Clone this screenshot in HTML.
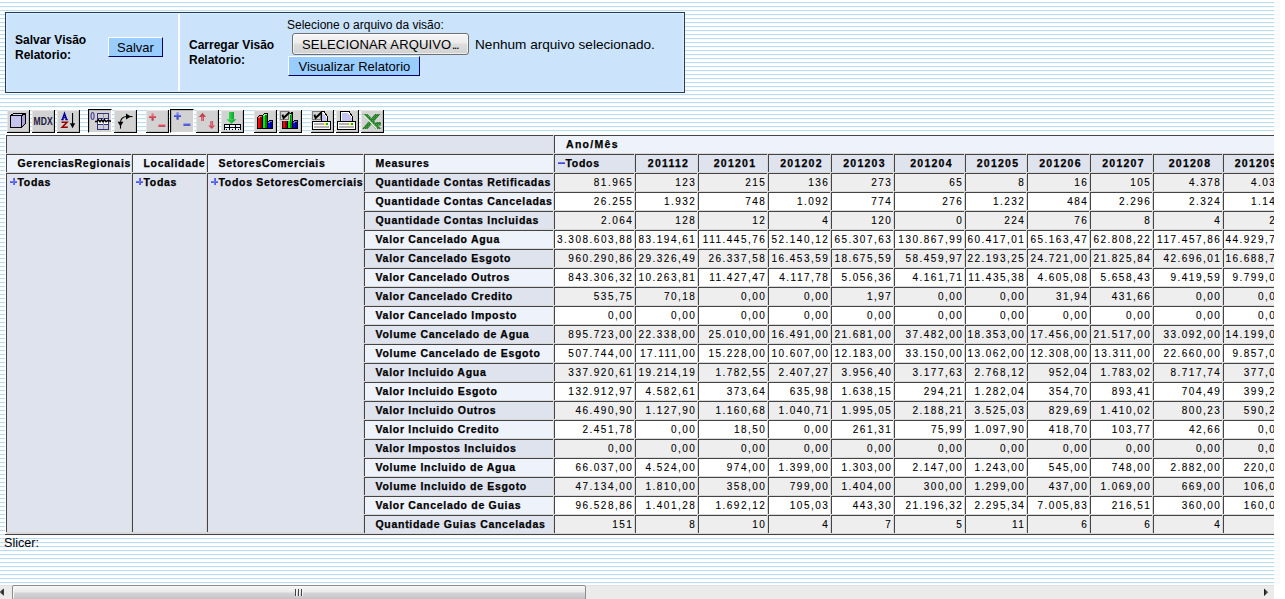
<!DOCTYPE html>
<html><head><meta charset="utf-8">
<style>
html,body{margin:0;padding:0;}
body{width:1285px;height:599px;overflow:hidden;position:relative;background:#fff;font-family:"Liberation Sans",sans-serif;}
#bg{position:absolute;left:0;top:0;width:1274px;height:599px;
 background:repeating-linear-gradient(to bottom,#fff 0px,#fff 2px,#bcdcf0 2px,#bcdcf0 3px,#f6fafd 3px,#f6fafd 4px);}
.abs{position:absolute;}
#panel{position:absolute;left:5px;top:12px;width:680px;height:81px;box-sizing:border-box;border:1px solid #213c58;background:#cbe4fc;}
#panel .inner{position:absolute;left:0;top:0;right:0;bottom:0;border:1px solid #dcefff;}
#divider{position:absolute;left:172px;top:1px;width:2px;height:77px;background:#fff;}
.lbl{position:absolute;font-weight:bold;font-size:12px;line-height:15px;color:#000;white-space:nowrap;}
.txt{position:absolute;font-size:12px;color:#000;white-space:nowrap;}
.bbtn{position:absolute;box-sizing:border-box;background:#99ccff;border-style:solid;border-width:1px;border-color:#fff #000066 #000066 #fff;font-size:13px;color:#000;white-space:nowrap;}
.fbtn{position:absolute;box-sizing:border-box;border:1px solid #707070;border-radius:3px;background:linear-gradient(to bottom,#f6f6f6 0%,#ececec 45%,#dddddd 50%,#d2d2d2 100%);box-shadow:inset 0 0 0 1px rgba(255,255,255,0.6);font-size:13px;white-space:nowrap;}
.tb{position:absolute;top:110px;width:23px;height:23px;box-sizing:border-box;background:#d2d2d2;border-right:1px solid #000;border-bottom:1px solid #000;box-shadow:inset 1px 1px 0 #e4e4e4,inset -1px -1px 0 #bcbcbc;}
.tb.pr{top:109px;width:24px;height:24px;border:none;border-top:1px solid #000;border-left:1px solid #000;border-right:1px solid #fff;border-bottom:1px solid #fff;box-shadow:inset 1px 1px 0 #b4b4b4;}
.tb svg{position:absolute;left:0;top:0;overflow:visible;}
.tb.pr svg{left:-1px;top:-1px;}
#tbl{position:absolute;left:5px;top:134px;width:1269px;height:401px;background:#fff;border-bottom:1px solid #444;box-sizing:border-box;overflow:hidden;}
.c{position:absolute;box-sizing:border-box;border-top:1px solid #444;border-left:1px solid #444;overflow:hidden;}
.hh{background:#dfe3ee;}
.hl{background:#eef2fb;}
.ce{background:#eeeeee;}
.co{background:#ffffff;}
.t{position:absolute;top:1px;font-size:10.5px;line-height:14px;white-space:nowrap;color:#000;}
.b{font-weight:bold;letter-spacing:0.7px;-webkit-text-stroke:0.25px #000;}
.r{right:0.6px;letter-spacing:1.5px;font-size:10px;top:1.5px;-webkit-text-stroke:0.1px #000;}
.ctr{left:0;right:0;text-align:center;}
.ic{position:absolute;display:block;line-height:0;}
.ic svg{display:block;}
#scroll{position:absolute;left:0;top:585px;width:1274px;height:14px;background:#ebebeb;}
#thumb{position:absolute;left:12px;top:0px;width:574px;height:15px;box-sizing:border-box;border:1px solid #8c8c8c;border-radius:2px;background:linear-gradient(to bottom,#f6f6f6 0px,#ebebeb 6px,#d4d4d6 7px,#c8c8ca 12px,#c0c0c4 13px);box-shadow:inset 1px 1px 0 #fafafa;}
</style></head><body>
<div id="bg"></div>

<div id="panel"><div class="inner"></div><div id="divider"></div></div>
<div class="lbl" style="left:15px;top:33px;">Salvar Visão<br>Relatorio:</div>
<div class="bbtn" style="left:108px;top:37px;width:55px;height:20px;"><span style="position:absolute;left:8px;top:1.5px;">Salvar</span></div>
<div class="lbl" style="left:189px;top:38px;">Carregar Visão<br>Relatorio:</div>
<div class="txt" style="left:287px;top:18px;">Selecione o arquivo da visão:</div>
<div class="fbtn" style="left:292px;top:33px;width:177px;height:22px;"><span style="position:absolute;left:9px;top:3px;letter-spacing:0.15px;">SELECIONAR ARQUIVO<span style="letter-spacing:-1.6px;margin-left:0.5px">...</span></span></div>
<div class="txt" style="left:475px;top:37px;font-size:13.6px;">Nenhum arquivo selecionado.</div>
<div class="bbtn" style="left:288px;top:56px;width:132px;height:20px;"><span style="position:absolute;left:9.5px;top:1.5px;">Visualizar Relatorio</span></div>

<div id="toolbar">
<div class="tb" style="left:7px"><svg width="23" height="23" viewBox="0 0 23 23" shape-rendering="crispEdges"><polygon points="3.5,5.5 6.5,3.5 18.5,3.5 14.5,5.5" fill="#d4d4f4" stroke="#000"/>
<polygon points="14.5,5.5 18.5,3.5 18.5,13.5 14.5,17.5" fill="#a4a4d6" stroke="#000"/>
<rect x="3.5" y="5.5" width="11" height="12" fill="#c4c4ec" stroke="#000"/></svg></div>
<div class="tb" style="left:32px"><svg width="23" height="23" viewBox="0 0 23 23" shape-rendering="crispEdges"><text x="1.6" y="14.6" font-family="Liberation Sans" font-weight="bold" font-size="10.5" fill="#20183c" textLength="19" lengthAdjust="spacingAndGlyphs" shape-rendering="auto">MDX</text></svg></div>
<div class="tb" style="left:57px"><svg width="23" height="23" viewBox="0 0 23 23" shape-rendering="crispEdges"><g shape-rendering="auto">
<path d="M5.4,9.4 L7.5,3.6 L9.6,9.4" fill="none" stroke="#0000a0" stroke-width="1.6"/>
<path d="M4.2,9.7 H6.6 M8.4,9.7 H10.8 M6.2,7.6 H8.8" fill="none" stroke="#0000a0" stroke-width="1.2"/>
<path d="M5,12.3 H10 L5.2,17.3 H10.2" fill="none" stroke="#980000" stroke-width="1.6"/>
<path d="M5,11.6 V13 M10.2,16.4 V18" fill="none" stroke="#980000" stroke-width="1"/>
<rect x="15" y="3" width="1.1" height="11" fill="#000"/>
<polygon points="12.9,13.2 18.2,13.2 15.55,18.2" fill="#000"/></g></svg></div>
<div class="tb pr" style="left:88px"><svg width="23" height="23" viewBox="0 0 23 23" shape-rendering="crispEdges"><g shape-rendering="auto"><ellipse cx="4.6" cy="7" rx="1.5" ry="3.5" fill="none" stroke="#4a4a96" stroke-width="1.2"/></g>
<rect x="9.5" y="4.5" width="11" height="16" fill="#d0d0d0" stroke="#33337a"/>
<rect x="10" y="9" width="10" height="6" fill="#ffffff"/>
<line x1="9.5" y1="9.5" x2="20.5" y2="9.5" stroke="#33337a"/>
<line x1="9.5" y1="15.5" x2="20.5" y2="15.5" stroke="#33337a"/>
<line x1="15.5" y1="5" x2="15.5" y2="20" stroke="#9090d8"/>
<g shape-rendering="auto"><path d="M7,12.4 L9,12.4 L10.5,10.8 L12,12.8 L13.5,10.8 L15,12.8 L16.5,10.8 L18,12.8 L19.5,11.6 L23,12.2" fill="none" stroke="#000" stroke-width="1.5"/></g></svg></div>
<div class="tb" style="left:114px"><svg width="23" height="23" viewBox="0 0 23 23" shape-rendering="crispEdges"><g shape-rendering="auto"><path d="M6.5,13 Q6.5,7 12.5,6.5" fill="none" stroke="#000" stroke-width="1.1"/>
<polygon points="12,3.4 16.8,6.5 12,9.6" fill="#000"/><rect x="15" y="6" width="3.5" height="1.1" fill="#000"/>
<polygon points="3.6,11.8 9.4,11.8 6.5,16.4" fill="#000"/><rect x="5.95" y="15" width="1.1" height="3.6" fill="#000"/></g></svg></div>
<div class="tb" style="left:146px"><svg width="23" height="23" viewBox="0 0 23 23" shape-rendering="crispEdges"><defs><linearGradient id="gr1" x1="0" y1="0" x2="0" y2="1"><stop offset="0" stop-color="#f590a0"/><stop offset="0.5" stop-color="#e05060"/><stop offset="1" stop-color="#a83040"/></linearGradient></defs>
<g transform="translate(0,0)" shape-rendering="auto"><rect x="3" y="5.8" width="7" height="2.2" fill="url(#gr1)"/><rect x="5.5" y="3" width="2.2" height="7.6" fill="url(#gr1)"/>
<rect x="12.4" y="14.2" width="7" height="2.6" fill="url(#gr1)"/></g></svg></div>
<div class="tb pr" style="left:170px"><svg width="23" height="23" viewBox="0 0 23 23" shape-rendering="crispEdges"><defs><linearGradient id="gb1" x1="0" y1="0" x2="0" y2="1"><stop offset="0" stop-color="#90a0ff"/><stop offset="0.5" stop-color="#5060e8"/><stop offset="1" stop-color="#3038a8"/></linearGradient></defs>
<g transform="translate(1,0)" shape-rendering="auto"><rect x="3" y="5.8" width="7" height="2.2" fill="url(#gb1)"/><rect x="5.5" y="3" width="2.2" height="7.6" fill="url(#gb1)"/>
<rect x="12.4" y="14.2" width="7" height="2.6" fill="url(#gb1)"/></g></svg></div>
<div class="tb" style="left:196px"><svg width="23" height="23" viewBox="0 0 23 23" shape-rendering="crispEdges"><defs><linearGradient id="ga" x1="0" y1="0" x2="1" y2="0"><stop offset="0" stop-color="#b03040"/><stop offset="0.5" stop-color="#f08090"/><stop offset="1" stop-color="#c03848"/></linearGradient></defs>
<g shape-rendering="auto"><polygon points="2.8,7 6.6,2.8 10,7" fill="#c04050"/><rect x="5.3" y="6.5" width="2.7" height="4.5" fill="url(#ga)"/>
<rect x="14.4" y="11" width="2.7" height="4.6" fill="url(#ga)"/><polygon points="12.2,15.4 19.2,15.4 15.7,19" fill="#d04858"/></g></svg></div>
<div class="tb" style="left:221px"><svg width="23" height="23" viewBox="0 0 23 23" shape-rendering="crispEdges"><defs><linearGradient id="gg" x1="0" y1="0" x2="1" y2="0"><stop offset="0" stop-color="#30e050"/><stop offset="1" stop-color="#10a030"/></linearGradient></defs>
<rect x="7.7" y="2" width="5.4" height="7.4" fill="url(#gg)"/>
<g shape-rendering="auto"><polygon points="5.4,9.3 15.4,9.3 10.4,14" fill="url(#gg)"/></g>
<rect x="3.5" y="14.5" width="16" height="6" fill="#e4f2ff" stroke="#000"/>
<line x1="3" y1="17.5" x2="20" y2="17.5" stroke="#000"/>
<line x1="8.5" y1="14" x2="8.5" y2="21" stroke="#000"/>
<line x1="14" y1="14" x2="14" y2="21" stroke="#000"/>
<rect x="3" y="20" width="17" height="1" fill="#d4d4d4"/>
<rect x="5" y="19" width="1" height="1" fill="#000"/><rect x="11" y="19" width="1" height="1" fill="#000"/><rect x="17" y="19" width="1" height="1" fill="#000"/></svg></div>
<div class="tb" style="left:254px"><svg width="23" height="23" viewBox="0 0 23 23" shape-rendering="crispEdges"><polygon points="3,8 4,6 5,5 9,5 9,19 3,19" fill="#000"/><rect x="4" y="8" width="2" height="10" fill="#ff0000"/><rect x="6" y="7" width="2" height="11" fill="#8c0000"/><rect x="5" y="6" width="3" height="1" fill="#ff7070"/><rect x="4" y="7" width="2" height="1" fill="#ff7070"/><polygon points="8,6 9,4 10,3 14,3 14,19 8,19" fill="#000"/><rect x="9" y="6" width="2" height="12" fill="#00f000"/><rect x="11" y="5" width="2" height="13" fill="#008000"/><rect x="10" y="4" width="3" height="1" fill="#80ff80"/><rect x="9" y="5" width="2" height="1" fill="#80ff80"/><polygon points="13,13 14,11 15,10 19,10 19,19 13,19" fill="#000"/><rect x="14" y="13" width="2" height="5" fill="#0000ff"/><rect x="16" y="12" width="2" height="6" fill="#00008c"/><rect x="15" y="11" width="3" height="1" fill="#7070ff"/><rect x="14" y="12" width="2" height="1" fill="#7070ff"/></svg></div>
<div class="tb" style="left:279px"><svg width="23" height="23" viewBox="0 0 23 23" shape-rendering="crispEdges"><polygon points="3,8 4,6 5,5 9,5 9,19 3,19" fill="#000"/><rect x="4" y="8" width="2" height="10" fill="#ff0000"/><rect x="6" y="7" width="2" height="11" fill="#8c0000"/><rect x="5" y="6" width="3" height="1" fill="#ff7070"/><rect x="4" y="7" width="2" height="1" fill="#ff7070"/><polygon points="8,6 9,4 10,3 14,3 14,19 8,19" fill="#000"/><rect x="9" y="6" width="2" height="12" fill="#00f000"/><rect x="11" y="5" width="2" height="13" fill="#008000"/><rect x="10" y="4" width="3" height="1" fill="#80ff80"/><rect x="9" y="5" width="2" height="1" fill="#80ff80"/><polygon points="13,13 14,11 15,10 19,10 19,19 13,19" fill="#000"/><rect x="14" y="13" width="2" height="5" fill="#0000ff"/><rect x="16" y="12" width="2" height="6" fill="#00008c"/><rect x="15" y="11" width="3" height="1" fill="#7070ff"/><rect x="14" y="12" width="2" height="1" fill="#7070ff"/><rect x="0" y="0" width="11" height="11" fill="#d2d2d2"/><rect x="1.5" y="1.5" width="8" height="8" fill="#d0d0d0" stroke="#7a7a7a"/>
<g shape-rendering="auto"><path d="M3.4,4.6 L4.6,8 L10.6,2.2" fill="none" stroke="#000" stroke-width="1.9"/></g><rect x="12" y="2" width="2" height="10" fill="#000"/><rect x="12.3" y="4" width="1" height="8" fill="#00c000"/></svg></div>
<div class="tb" style="left:311px"><svg width="23" height="23" viewBox="0 0 23 23" shape-rendering="crispEdges"><polygon points="10.5,1.5 13,1.5 16.5,6.5 16.5,11.5 10.5,11.5" fill="#fff" stroke="#000"/><polygon points="11,3 12,3 15.5,7.5 15.5,11 11,11" fill="#c4c4ee"/><rect x="1.5" y="1.5" width="8" height="8" fill="#d0d0d0" stroke="#7a7a7a"/>
<g shape-rendering="auto"><path d="M3.4,4.6 L4.6,8 L10.6,2.2" fill="none" stroke="#000" stroke-width="1.9"/></g><rect x="1.6" y="11.6" width="17.8" height="7.8" rx="1.2" fill="#fff" stroke="#000" stroke-width="1.3"/>
<g fill="#b4b4b4"><rect x="3" y="13.2" width="10" height="1.6"/><rect x="3" y="16.4" width="15" height="1.6"/></g>
<rect x="13" y="13" width="2" height="2" fill="#ffff00"/><rect x="15" y="13" width="2" height="2" fill="#00c000"/></svg></div>
<div class="tb" style="left:336px"><svg width="23" height="23" viewBox="0 0 23 23" shape-rendering="crispEdges"><polygon points="4.5,1.5 13,1.5 16.5,6.5 16.5,11.5 4.5,11.5" fill="#fff" stroke="#000"/>
<polygon points="6,3 12,3 15.5,7.5 15.5,11 6,11" fill="#c4c4ee"/><rect x="1.6" y="11.6" width="17.8" height="7.8" rx="1.2" fill="#fff" stroke="#000" stroke-width="1.3"/>
<g fill="#b4b4b4"><rect x="3" y="13.2" width="10" height="1.6"/><rect x="3" y="16.4" width="15" height="1.6"/></g>
<rect x="13" y="13" width="2" height="2" fill="#ffff00"/><rect x="15" y="13" width="2" height="2" fill="#00c000"/></svg></div>
<div class="tb" style="left:361px"><svg width="23" height="23" viewBox="0 0 23 23" shape-rendering="crispEdges"><defs><pattern id="dith" width="2" height="2" patternUnits="userSpaceOnUse"><rect width="2" height="2" fill="#188018"/><rect x="1" y="0" width="1" height="1" fill="#6a9a6a"/><rect x="0" y="1" width="1" height="1" fill="#3a8a3a"/></pattern></defs><g shape-rendering="auto"><polygon points="1,4 6.5,4 20.5,19 15,19" fill="url(#dith)"/>
<polygon points="14,4 19.5,4 6.5,19 1,19" fill="url(#dith)"/>
<rect x="15" y="12" width="5" height="3.5" fill="url(#dith)"/>
<line x1="2.2" y1="4.6" x2="15.8" y2="18.6" stroke="#ffffff" stroke-width="1.1"/></g></svg></div>
</div>

<div id="tblwrap" style="position:absolute;left:0;top:0;width:1274px;height:599px;overflow:hidden;">
<div style="position:absolute;left:5px;top:534px;width:1269px;height:1px;background:#444;"></div>
<div style="position:absolute;left:5px;top:134px;width:1269px;height:400px;background:#fff;"></div><div style="position:absolute;left:6px;top:135px;width:1268px;height:399px;background:#d8d8d8;"></div>
<div class="c hh" style="left:6px;top:135px;width:547px;height:18px;"></div>
<div class="c hl" style="left:554px;top:135px;width:746px;height:18px;"><span class="t b" style="left:11px;letter-spacing:1.3px">Ano/Mês</span></div>
<div class="c hl" style="left:6px;top:154px;width:125px;height:18px;"><span class="t b" style="left:10.5px">GerenciasRegionais</span></div>
<div class="c hl" style="left:132px;top:154px;width:74px;height:18px;"><span class="t b" style="left:10.5px">Localidade</span></div>
<div class="c hl" style="left:207px;top:154px;width:156px;height:18px;"><span class="t b" style="left:10.5px">SetoresComerciais</span></div>
<div class="c hl" style="left:364px;top:154px;width:189px;height:18px;"><span class="t b" style="left:10.5px">Measures</span></div>
<div class="c hh" style="left:554px;top:154px;width:80px;height:18px;"><span class="ic" style="left:3px;top:7px"><svg width="7" height="2" viewBox="0 0 7 2" shape-rendering="crispEdges"><rect x="0" y="0" width="7" height="1" fill="#6a78f4"/><rect x="0" y="1" width="7" height="1" fill="#3c48c4"/></svg></span><span class="t b" style="left:10.5px">Todos</span></div>
<div class="c hh" style="left:635px;top:154px;width:62px;height:18px;"><span class="t b ctr" style="letter-spacing:1.25px;text-indent:4px">201112</span></div>
<div class="c hh" style="left:698px;top:154px;width:69px;height:18px;"><span class="t b ctr" style="letter-spacing:1.25px;text-indent:4px">201201</span></div>
<div class="c hh" style="left:768px;top:154px;width:62px;height:18px;"><span class="t b ctr" style="letter-spacing:1.25px;text-indent:4px">201202</span></div>
<div class="c hh" style="left:831px;top:154px;width:62px;height:18px;"><span class="t b ctr" style="letter-spacing:1.25px;text-indent:4px">201203</span></div>
<div class="c hh" style="left:894px;top:154px;width:70px;height:18px;"><span class="t b ctr" style="letter-spacing:1.25px;text-indent:4px">201204</span></div>
<div class="c hh" style="left:965px;top:154px;width:61px;height:18px;"><span class="t b ctr" style="letter-spacing:1.25px;text-indent:4px">201205</span></div>
<div class="c hh" style="left:1027px;top:154px;width:62px;height:18px;"><span class="t b ctr" style="letter-spacing:1.25px;text-indent:4px">201206</span></div>
<div class="c hh" style="left:1090px;top:154px;width:62px;height:18px;"><span class="t b ctr" style="letter-spacing:1.25px;text-indent:4px">201207</span></div>
<div class="c hh" style="left:1153px;top:154px;width:69px;height:18px;"><span class="t b ctr" style="letter-spacing:1.25px;text-indent:4px">201208</span></div>
<div class="c hh" style="left:1223px;top:154px;width:61px;height:18px;"><span class="t b ctr" style="letter-spacing:1.25px;text-indent:4px">201209</span></div>
<div class="c hh" style="left:6px;top:173px;width:125px;height:359px;"><span class="ic" style="left:3px;top:4px"><svg width="7" height="7" viewBox="0 0 7 7" shape-rendering="crispEdges"><rect x="0" y="3" width="7" height="2" fill="#4c5ae4"/><rect x="3" y="0" width="2" height="7" fill="#4c5ae4"/><rect x="0" y="3" width="7" height="1" fill="#6c7af0"/><rect x="3" y="0" width="1" height="7" fill="#6c7af0"/></svg></span><span class="t b" style="left:10.5px">Todas</span></div>
<div class="c hh" style="left:132px;top:173px;width:74px;height:359px;"><span class="ic" style="left:3px;top:4px"><svg width="7" height="7" viewBox="0 0 7 7" shape-rendering="crispEdges"><rect x="0" y="3" width="7" height="2" fill="#4c5ae4"/><rect x="3" y="0" width="2" height="7" fill="#4c5ae4"/><rect x="0" y="3" width="7" height="1" fill="#6c7af0"/><rect x="3" y="0" width="1" height="7" fill="#6c7af0"/></svg></span><span class="t b" style="left:10.5px">Todas</span></div>
<div class="c hh" style="left:207px;top:173px;width:156px;height:359px;"><span class="ic" style="left:3px;top:4px"><svg width="7" height="7" viewBox="0 0 7 7" shape-rendering="crispEdges"><rect x="0" y="3" width="7" height="2" fill="#4c5ae4"/><rect x="3" y="0" width="2" height="7" fill="#4c5ae4"/><rect x="0" y="3" width="7" height="1" fill="#6c7af0"/><rect x="3" y="0" width="1" height="7" fill="#6c7af0"/></svg></span><span class="t b" style="left:10.5px">Todos SetoresComerciais</span></div>
<div class="c hh" style="left:364px;top:173px;width:189px;height:18px;"><span class="t b" style="left:10.5px">Quantidade Contas Retificadas</span></div>
<div class="c ce" style="left:554px;top:173px;width:80px;height:18px;"><span class="t r">81.965</span></div>
<div class="c ce" style="left:635px;top:173px;width:62px;height:18px;"><span class="t r">123</span></div>
<div class="c ce" style="left:698px;top:173px;width:69px;height:18px;"><span class="t r">215</span></div>
<div class="c ce" style="left:768px;top:173px;width:62px;height:18px;"><span class="t r">136</span></div>
<div class="c ce" style="left:831px;top:173px;width:62px;height:18px;"><span class="t r">273</span></div>
<div class="c ce" style="left:894px;top:173px;width:70px;height:18px;"><span class="t r">65</span></div>
<div class="c ce" style="left:965px;top:173px;width:61px;height:18px;"><span class="t r">8</span></div>
<div class="c ce" style="left:1027px;top:173px;width:62px;height:18px;"><span class="t r">16</span></div>
<div class="c ce" style="left:1090px;top:173px;width:62px;height:18px;"><span class="t r">105</span></div>
<div class="c ce" style="left:1153px;top:173px;width:69px;height:18px;"><span class="t r">4.378</span></div>
<div class="c ce" style="left:1223px;top:173px;width:61px;height:18px;"><span class="t r">4.031</span></div>
<div class="c hl" style="left:364px;top:192px;width:189px;height:18px;"><span class="t b" style="left:10.5px">Quantidade Contas Canceladas</span></div>
<div class="c co" style="left:554px;top:192px;width:80px;height:18px;"><span class="t r">26.255</span></div>
<div class="c co" style="left:635px;top:192px;width:62px;height:18px;"><span class="t r">1.932</span></div>
<div class="c co" style="left:698px;top:192px;width:69px;height:18px;"><span class="t r">748</span></div>
<div class="c co" style="left:768px;top:192px;width:62px;height:18px;"><span class="t r">1.092</span></div>
<div class="c co" style="left:831px;top:192px;width:62px;height:18px;"><span class="t r">774</span></div>
<div class="c co" style="left:894px;top:192px;width:70px;height:18px;"><span class="t r">276</span></div>
<div class="c co" style="left:965px;top:192px;width:61px;height:18px;"><span class="t r">1.232</span></div>
<div class="c co" style="left:1027px;top:192px;width:62px;height:18px;"><span class="t r">484</span></div>
<div class="c co" style="left:1090px;top:192px;width:62px;height:18px;"><span class="t r">2.296</span></div>
<div class="c co" style="left:1153px;top:192px;width:69px;height:18px;"><span class="t r">2.324</span></div>
<div class="c co" style="left:1223px;top:192px;width:61px;height:18px;"><span class="t r">1.145</span></div>
<div class="c hh" style="left:364px;top:211px;width:189px;height:18px;"><span class="t b" style="left:10.5px">Quantidade Contas Incluidas</span></div>
<div class="c ce" style="left:554px;top:211px;width:80px;height:18px;"><span class="t r">2.064</span></div>
<div class="c ce" style="left:635px;top:211px;width:62px;height:18px;"><span class="t r">128</span></div>
<div class="c ce" style="left:698px;top:211px;width:69px;height:18px;"><span class="t r">12</span></div>
<div class="c ce" style="left:768px;top:211px;width:62px;height:18px;"><span class="t r">4</span></div>
<div class="c ce" style="left:831px;top:211px;width:62px;height:18px;"><span class="t r">120</span></div>
<div class="c ce" style="left:894px;top:211px;width:70px;height:18px;"><span class="t r">0</span></div>
<div class="c ce" style="left:965px;top:211px;width:61px;height:18px;"><span class="t r">224</span></div>
<div class="c ce" style="left:1027px;top:211px;width:62px;height:18px;"><span class="t r">76</span></div>
<div class="c ce" style="left:1090px;top:211px;width:62px;height:18px;"><span class="t r">8</span></div>
<div class="c ce" style="left:1153px;top:211px;width:69px;height:18px;"><span class="t r">4</span></div>
<div class="c ce" style="left:1223px;top:211px;width:61px;height:18px;"><span class="t r">21</span></div>
<div class="c hl" style="left:364px;top:230px;width:189px;height:18px;"><span class="t b" style="left:10.5px">Valor Cancelado Agua</span></div>
<div class="c co" style="left:554px;top:230px;width:80px;height:18px;"><span class="t r">3.308.603,88</span></div>
<div class="c co" style="left:635px;top:230px;width:62px;height:18px;"><span class="t r">83.194,61</span></div>
<div class="c co" style="left:698px;top:230px;width:69px;height:18px;"><span class="t r">111.445,76</span></div>
<div class="c co" style="left:768px;top:230px;width:62px;height:18px;"><span class="t r">52.140,12</span></div>
<div class="c co" style="left:831px;top:230px;width:62px;height:18px;"><span class="t r">65.307,63</span></div>
<div class="c co" style="left:894px;top:230px;width:70px;height:18px;"><span class="t r">130.867,99</span></div>
<div class="c co" style="left:965px;top:230px;width:61px;height:18px;"><span class="t r">60.417,01</span></div>
<div class="c co" style="left:1027px;top:230px;width:62px;height:18px;"><span class="t r">65.163,47</span></div>
<div class="c co" style="left:1090px;top:230px;width:62px;height:18px;"><span class="t r">62.808,22</span></div>
<div class="c co" style="left:1153px;top:230px;width:69px;height:18px;"><span class="t r">117.457,86</span></div>
<div class="c co" style="left:1223px;top:230px;width:61px;height:18px;"><span class="t r">44.929,74</span></div>
<div class="c hh" style="left:364px;top:249px;width:189px;height:18px;"><span class="t b" style="left:10.5px">Valor Cancelado Esgoto</span></div>
<div class="c ce" style="left:554px;top:249px;width:80px;height:18px;"><span class="t r">960.290,86</span></div>
<div class="c ce" style="left:635px;top:249px;width:62px;height:18px;"><span class="t r">29.326,49</span></div>
<div class="c ce" style="left:698px;top:249px;width:69px;height:18px;"><span class="t r">26.337,58</span></div>
<div class="c ce" style="left:768px;top:249px;width:62px;height:18px;"><span class="t r">16.453,59</span></div>
<div class="c ce" style="left:831px;top:249px;width:62px;height:18px;"><span class="t r">18.675,59</span></div>
<div class="c ce" style="left:894px;top:249px;width:70px;height:18px;"><span class="t r">58.459,97</span></div>
<div class="c ce" style="left:965px;top:249px;width:61px;height:18px;"><span class="t r">22.193,25</span></div>
<div class="c ce" style="left:1027px;top:249px;width:62px;height:18px;"><span class="t r">24.721,00</span></div>
<div class="c ce" style="left:1090px;top:249px;width:62px;height:18px;"><span class="t r">21.825,84</span></div>
<div class="c ce" style="left:1153px;top:249px;width:69px;height:18px;"><span class="t r">42.696,01</span></div>
<div class="c ce" style="left:1223px;top:249px;width:61px;height:18px;"><span class="t r">16.688,72</span></div>
<div class="c hl" style="left:364px;top:268px;width:189px;height:18px;"><span class="t b" style="left:10.5px">Valor Cancelado Outros</span></div>
<div class="c co" style="left:554px;top:268px;width:80px;height:18px;"><span class="t r">843.306,32</span></div>
<div class="c co" style="left:635px;top:268px;width:62px;height:18px;"><span class="t r">10.263,81</span></div>
<div class="c co" style="left:698px;top:268px;width:69px;height:18px;"><span class="t r">11.427,47</span></div>
<div class="c co" style="left:768px;top:268px;width:62px;height:18px;"><span class="t r">4.117,78</span></div>
<div class="c co" style="left:831px;top:268px;width:62px;height:18px;"><span class="t r">5.056,36</span></div>
<div class="c co" style="left:894px;top:268px;width:70px;height:18px;"><span class="t r">4.161,71</span></div>
<div class="c co" style="left:965px;top:268px;width:61px;height:18px;"><span class="t r">11.435,38</span></div>
<div class="c co" style="left:1027px;top:268px;width:62px;height:18px;"><span class="t r">4.605,08</span></div>
<div class="c co" style="left:1090px;top:268px;width:62px;height:18px;"><span class="t r">5.658,43</span></div>
<div class="c co" style="left:1153px;top:268px;width:69px;height:18px;"><span class="t r">9.419,59</span></div>
<div class="c co" style="left:1223px;top:268px;width:61px;height:18px;"><span class="t r">9.799,03</span></div>
<div class="c hh" style="left:364px;top:287px;width:189px;height:18px;"><span class="t b" style="left:10.5px">Valor Cancelado Credito</span></div>
<div class="c ce" style="left:554px;top:287px;width:80px;height:18px;"><span class="t r">535,75</span></div>
<div class="c ce" style="left:635px;top:287px;width:62px;height:18px;"><span class="t r">70,18</span></div>
<div class="c ce" style="left:698px;top:287px;width:69px;height:18px;"><span class="t r">0,00</span></div>
<div class="c ce" style="left:768px;top:287px;width:62px;height:18px;"><span class="t r">0,00</span></div>
<div class="c ce" style="left:831px;top:287px;width:62px;height:18px;"><span class="t r">1,97</span></div>
<div class="c ce" style="left:894px;top:287px;width:70px;height:18px;"><span class="t r">0,00</span></div>
<div class="c ce" style="left:965px;top:287px;width:61px;height:18px;"><span class="t r">0,00</span></div>
<div class="c ce" style="left:1027px;top:287px;width:62px;height:18px;"><span class="t r">31,94</span></div>
<div class="c ce" style="left:1090px;top:287px;width:62px;height:18px;"><span class="t r">431,66</span></div>
<div class="c ce" style="left:1153px;top:287px;width:69px;height:18px;"><span class="t r">0,00</span></div>
<div class="c ce" style="left:1223px;top:287px;width:61px;height:18px;"><span class="t r">0,00</span></div>
<div class="c hl" style="left:364px;top:306px;width:189px;height:18px;"><span class="t b" style="left:10.5px">Valor Cancelado Imposto</span></div>
<div class="c co" style="left:554px;top:306px;width:80px;height:18px;"><span class="t r">0,00</span></div>
<div class="c co" style="left:635px;top:306px;width:62px;height:18px;"><span class="t r">0,00</span></div>
<div class="c co" style="left:698px;top:306px;width:69px;height:18px;"><span class="t r">0,00</span></div>
<div class="c co" style="left:768px;top:306px;width:62px;height:18px;"><span class="t r">0,00</span></div>
<div class="c co" style="left:831px;top:306px;width:62px;height:18px;"><span class="t r">0,00</span></div>
<div class="c co" style="left:894px;top:306px;width:70px;height:18px;"><span class="t r">0,00</span></div>
<div class="c co" style="left:965px;top:306px;width:61px;height:18px;"><span class="t r">0,00</span></div>
<div class="c co" style="left:1027px;top:306px;width:62px;height:18px;"><span class="t r">0,00</span></div>
<div class="c co" style="left:1090px;top:306px;width:62px;height:18px;"><span class="t r">0,00</span></div>
<div class="c co" style="left:1153px;top:306px;width:69px;height:18px;"><span class="t r">0,00</span></div>
<div class="c co" style="left:1223px;top:306px;width:61px;height:18px;"><span class="t r">0,00</span></div>
<div class="c hh" style="left:364px;top:325px;width:189px;height:18px;"><span class="t b" style="left:10.5px">Volume Cancelado de Agua</span></div>
<div class="c ce" style="left:554px;top:325px;width:80px;height:18px;"><span class="t r">895.723,00</span></div>
<div class="c ce" style="left:635px;top:325px;width:62px;height:18px;"><span class="t r">22.338,00</span></div>
<div class="c ce" style="left:698px;top:325px;width:69px;height:18px;"><span class="t r">25.010,00</span></div>
<div class="c ce" style="left:768px;top:325px;width:62px;height:18px;"><span class="t r">16.491,00</span></div>
<div class="c ce" style="left:831px;top:325px;width:62px;height:18px;"><span class="t r">21.681,00</span></div>
<div class="c ce" style="left:894px;top:325px;width:70px;height:18px;"><span class="t r">37.482,00</span></div>
<div class="c ce" style="left:965px;top:325px;width:61px;height:18px;"><span class="t r">18.353,00</span></div>
<div class="c ce" style="left:1027px;top:325px;width:62px;height:18px;"><span class="t r">17.456,00</span></div>
<div class="c ce" style="left:1090px;top:325px;width:62px;height:18px;"><span class="t r">21.517,00</span></div>
<div class="c ce" style="left:1153px;top:325px;width:69px;height:18px;"><span class="t r">33.092,00</span></div>
<div class="c ce" style="left:1223px;top:325px;width:61px;height:18px;"><span class="t r">14.199,00</span></div>
<div class="c hl" style="left:364px;top:344px;width:189px;height:18px;"><span class="t b" style="left:10.5px">Volume Cancelado de Esgoto</span></div>
<div class="c co" style="left:554px;top:344px;width:80px;height:18px;"><span class="t r">507.744,00</span></div>
<div class="c co" style="left:635px;top:344px;width:62px;height:18px;"><span class="t r">17.111,00</span></div>
<div class="c co" style="left:698px;top:344px;width:69px;height:18px;"><span class="t r">15.228,00</span></div>
<div class="c co" style="left:768px;top:344px;width:62px;height:18px;"><span class="t r">10.607,00</span></div>
<div class="c co" style="left:831px;top:344px;width:62px;height:18px;"><span class="t r">12.183,00</span></div>
<div class="c co" style="left:894px;top:344px;width:70px;height:18px;"><span class="t r">33.150,00</span></div>
<div class="c co" style="left:965px;top:344px;width:61px;height:18px;"><span class="t r">13.062,00</span></div>
<div class="c co" style="left:1027px;top:344px;width:62px;height:18px;"><span class="t r">12.308,00</span></div>
<div class="c co" style="left:1090px;top:344px;width:62px;height:18px;"><span class="t r">13.311,00</span></div>
<div class="c co" style="left:1153px;top:344px;width:69px;height:18px;"><span class="t r">22.660,00</span></div>
<div class="c co" style="left:1223px;top:344px;width:61px;height:18px;"><span class="t r">9.857,00</span></div>
<div class="c hh" style="left:364px;top:363px;width:189px;height:18px;"><span class="t b" style="left:10.5px">Valor Incluido Agua</span></div>
<div class="c ce" style="left:554px;top:363px;width:80px;height:18px;"><span class="t r">337.920,61</span></div>
<div class="c ce" style="left:635px;top:363px;width:62px;height:18px;"><span class="t r">19.214,19</span></div>
<div class="c ce" style="left:698px;top:363px;width:69px;height:18px;"><span class="t r">1.782,55</span></div>
<div class="c ce" style="left:768px;top:363px;width:62px;height:18px;"><span class="t r">2.407,27</span></div>
<div class="c ce" style="left:831px;top:363px;width:62px;height:18px;"><span class="t r">3.956,40</span></div>
<div class="c ce" style="left:894px;top:363px;width:70px;height:18px;"><span class="t r">3.177,63</span></div>
<div class="c ce" style="left:965px;top:363px;width:61px;height:18px;"><span class="t r">2.768,12</span></div>
<div class="c ce" style="left:1027px;top:363px;width:62px;height:18px;"><span class="t r">952,04</span></div>
<div class="c ce" style="left:1090px;top:363px;width:62px;height:18px;"><span class="t r">1.783,02</span></div>
<div class="c ce" style="left:1153px;top:363px;width:69px;height:18px;"><span class="t r">8.717,74</span></div>
<div class="c ce" style="left:1223px;top:363px;width:61px;height:18px;"><span class="t r">377,00</span></div>
<div class="c hl" style="left:364px;top:382px;width:189px;height:18px;"><span class="t b" style="left:10.5px">Valor Incluido Esgoto</span></div>
<div class="c co" style="left:554px;top:382px;width:80px;height:18px;"><span class="t r">132.912,97</span></div>
<div class="c co" style="left:635px;top:382px;width:62px;height:18px;"><span class="t r">4.582,61</span></div>
<div class="c co" style="left:698px;top:382px;width:69px;height:18px;"><span class="t r">373,64</span></div>
<div class="c co" style="left:768px;top:382px;width:62px;height:18px;"><span class="t r">635,98</span></div>
<div class="c co" style="left:831px;top:382px;width:62px;height:18px;"><span class="t r">1.638,15</span></div>
<div class="c co" style="left:894px;top:382px;width:70px;height:18px;"><span class="t r">294,21</span></div>
<div class="c co" style="left:965px;top:382px;width:61px;height:18px;"><span class="t r">1.282,04</span></div>
<div class="c co" style="left:1027px;top:382px;width:62px;height:18px;"><span class="t r">354,70</span></div>
<div class="c co" style="left:1090px;top:382px;width:62px;height:18px;"><span class="t r">893,41</span></div>
<div class="c co" style="left:1153px;top:382px;width:69px;height:18px;"><span class="t r">704,49</span></div>
<div class="c co" style="left:1223px;top:382px;width:61px;height:18px;"><span class="t r">399,21</span></div>
<div class="c hh" style="left:364px;top:401px;width:189px;height:18px;"><span class="t b" style="left:10.5px">Valor Incluido Outros</span></div>
<div class="c ce" style="left:554px;top:401px;width:80px;height:18px;"><span class="t r">46.490,90</span></div>
<div class="c ce" style="left:635px;top:401px;width:62px;height:18px;"><span class="t r">1.127,90</span></div>
<div class="c ce" style="left:698px;top:401px;width:69px;height:18px;"><span class="t r">1.160,68</span></div>
<div class="c ce" style="left:768px;top:401px;width:62px;height:18px;"><span class="t r">1.040,71</span></div>
<div class="c ce" style="left:831px;top:401px;width:62px;height:18px;"><span class="t r">1.995,05</span></div>
<div class="c ce" style="left:894px;top:401px;width:70px;height:18px;"><span class="t r">2.188,21</span></div>
<div class="c ce" style="left:965px;top:401px;width:61px;height:18px;"><span class="t r">3.525,03</span></div>
<div class="c ce" style="left:1027px;top:401px;width:62px;height:18px;"><span class="t r">829,69</span></div>
<div class="c ce" style="left:1090px;top:401px;width:62px;height:18px;"><span class="t r">1.410,02</span></div>
<div class="c ce" style="left:1153px;top:401px;width:69px;height:18px;"><span class="t r">800,23</span></div>
<div class="c ce" style="left:1223px;top:401px;width:61px;height:18px;"><span class="t r">590,22</span></div>
<div class="c hl" style="left:364px;top:420px;width:189px;height:18px;"><span class="t b" style="left:10.5px">Valor Incluido Credito</span></div>
<div class="c co" style="left:554px;top:420px;width:80px;height:18px;"><span class="t r">2.451,78</span></div>
<div class="c co" style="left:635px;top:420px;width:62px;height:18px;"><span class="t r">0,00</span></div>
<div class="c co" style="left:698px;top:420px;width:69px;height:18px;"><span class="t r">18,50</span></div>
<div class="c co" style="left:768px;top:420px;width:62px;height:18px;"><span class="t r">0,00</span></div>
<div class="c co" style="left:831px;top:420px;width:62px;height:18px;"><span class="t r">261,31</span></div>
<div class="c co" style="left:894px;top:420px;width:70px;height:18px;"><span class="t r">75,99</span></div>
<div class="c co" style="left:965px;top:420px;width:61px;height:18px;"><span class="t r">1.097,90</span></div>
<div class="c co" style="left:1027px;top:420px;width:62px;height:18px;"><span class="t r">418,70</span></div>
<div class="c co" style="left:1090px;top:420px;width:62px;height:18px;"><span class="t r">103,77</span></div>
<div class="c co" style="left:1153px;top:420px;width:69px;height:18px;"><span class="t r">42,66</span></div>
<div class="c co" style="left:1223px;top:420px;width:61px;height:18px;"><span class="t r">0,00</span></div>
<div class="c hh" style="left:364px;top:439px;width:189px;height:18px;"><span class="t b" style="left:10.5px">Valor Impostos Incluidos</span></div>
<div class="c ce" style="left:554px;top:439px;width:80px;height:18px;"><span class="t r">0,00</span></div>
<div class="c ce" style="left:635px;top:439px;width:62px;height:18px;"><span class="t r">0,00</span></div>
<div class="c ce" style="left:698px;top:439px;width:69px;height:18px;"><span class="t r">0,00</span></div>
<div class="c ce" style="left:768px;top:439px;width:62px;height:18px;"><span class="t r">0,00</span></div>
<div class="c ce" style="left:831px;top:439px;width:62px;height:18px;"><span class="t r">0,00</span></div>
<div class="c ce" style="left:894px;top:439px;width:70px;height:18px;"><span class="t r">0,00</span></div>
<div class="c ce" style="left:965px;top:439px;width:61px;height:18px;"><span class="t r">0,00</span></div>
<div class="c ce" style="left:1027px;top:439px;width:62px;height:18px;"><span class="t r">0,00</span></div>
<div class="c ce" style="left:1090px;top:439px;width:62px;height:18px;"><span class="t r">0,00</span></div>
<div class="c ce" style="left:1153px;top:439px;width:69px;height:18px;"><span class="t r">0,00</span></div>
<div class="c ce" style="left:1223px;top:439px;width:61px;height:18px;"><span class="t r">0,00</span></div>
<div class="c hl" style="left:364px;top:458px;width:189px;height:18px;"><span class="t b" style="left:10.5px">Volume Incluido de Agua</span></div>
<div class="c co" style="left:554px;top:458px;width:80px;height:18px;"><span class="t r">66.037,00</span></div>
<div class="c co" style="left:635px;top:458px;width:62px;height:18px;"><span class="t r">4.524,00</span></div>
<div class="c co" style="left:698px;top:458px;width:69px;height:18px;"><span class="t r">974,00</span></div>
<div class="c co" style="left:768px;top:458px;width:62px;height:18px;"><span class="t r">1.399,00</span></div>
<div class="c co" style="left:831px;top:458px;width:62px;height:18px;"><span class="t r">1.303,00</span></div>
<div class="c co" style="left:894px;top:458px;width:70px;height:18px;"><span class="t r">2.147,00</span></div>
<div class="c co" style="left:965px;top:458px;width:61px;height:18px;"><span class="t r">1.243,00</span></div>
<div class="c co" style="left:1027px;top:458px;width:62px;height:18px;"><span class="t r">545,00</span></div>
<div class="c co" style="left:1090px;top:458px;width:62px;height:18px;"><span class="t r">748,00</span></div>
<div class="c co" style="left:1153px;top:458px;width:69px;height:18px;"><span class="t r">2.882,00</span></div>
<div class="c co" style="left:1223px;top:458px;width:61px;height:18px;"><span class="t r">220,00</span></div>
<div class="c hh" style="left:364px;top:477px;width:189px;height:18px;"><span class="t b" style="left:10.5px">Volume Incluido de Esgoto</span></div>
<div class="c ce" style="left:554px;top:477px;width:80px;height:18px;"><span class="t r">47.134,00</span></div>
<div class="c ce" style="left:635px;top:477px;width:62px;height:18px;"><span class="t r">1.810,00</span></div>
<div class="c ce" style="left:698px;top:477px;width:69px;height:18px;"><span class="t r">358,00</span></div>
<div class="c ce" style="left:768px;top:477px;width:62px;height:18px;"><span class="t r">799,00</span></div>
<div class="c ce" style="left:831px;top:477px;width:62px;height:18px;"><span class="t r">1.404,00</span></div>
<div class="c ce" style="left:894px;top:477px;width:70px;height:18px;"><span class="t r">300,00</span></div>
<div class="c ce" style="left:965px;top:477px;width:61px;height:18px;"><span class="t r">1.299,00</span></div>
<div class="c ce" style="left:1027px;top:477px;width:62px;height:18px;"><span class="t r">437,00</span></div>
<div class="c ce" style="left:1090px;top:477px;width:62px;height:18px;"><span class="t r">1.069,00</span></div>
<div class="c ce" style="left:1153px;top:477px;width:69px;height:18px;"><span class="t r">669,00</span></div>
<div class="c ce" style="left:1223px;top:477px;width:61px;height:18px;"><span class="t r">106,00</span></div>
<div class="c hl" style="left:364px;top:496px;width:189px;height:18px;"><span class="t b" style="left:10.5px">Valor Cancelado de Guias</span></div>
<div class="c co" style="left:554px;top:496px;width:80px;height:18px;"><span class="t r">96.528,86</span></div>
<div class="c co" style="left:635px;top:496px;width:62px;height:18px;"><span class="t r">1.401,28</span></div>
<div class="c co" style="left:698px;top:496px;width:69px;height:18px;"><span class="t r">1.692,12</span></div>
<div class="c co" style="left:768px;top:496px;width:62px;height:18px;"><span class="t r">105,03</span></div>
<div class="c co" style="left:831px;top:496px;width:62px;height:18px;"><span class="t r">443,30</span></div>
<div class="c co" style="left:894px;top:496px;width:70px;height:18px;"><span class="t r">21.196,32</span></div>
<div class="c co" style="left:965px;top:496px;width:61px;height:18px;"><span class="t r">2.295,34</span></div>
<div class="c co" style="left:1027px;top:496px;width:62px;height:18px;"><span class="t r">7.005,83</span></div>
<div class="c co" style="left:1090px;top:496px;width:62px;height:18px;"><span class="t r">216,51</span></div>
<div class="c co" style="left:1153px;top:496px;width:69px;height:18px;"><span class="t r">360,00</span></div>
<div class="c co" style="left:1223px;top:496px;width:61px;height:18px;"><span class="t r">160,00</span></div>
<div class="c hh" style="left:364px;top:515px;width:189px;height:18px;"><span class="t b" style="left:10.5px">Quantidade Guias Canceladas</span></div>
<div class="c ce" style="left:554px;top:515px;width:80px;height:18px;"><span class="t r">151</span></div>
<div class="c ce" style="left:635px;top:515px;width:62px;height:18px;"><span class="t r">8</span></div>
<div class="c ce" style="left:698px;top:515px;width:69px;height:18px;"><span class="t r">10</span></div>
<div class="c ce" style="left:768px;top:515px;width:62px;height:18px;"><span class="t r">4</span></div>
<div class="c ce" style="left:831px;top:515px;width:62px;height:18px;"><span class="t r">7</span></div>
<div class="c ce" style="left:894px;top:515px;width:70px;height:18px;"><span class="t r">5</span></div>
<div class="c ce" style="left:965px;top:515px;width:61px;height:18px;"><span class="t r">11</span></div>
<div class="c ce" style="left:1027px;top:515px;width:62px;height:18px;"><span class="t r">6</span></div>
<div class="c ce" style="left:1090px;top:515px;width:62px;height:18px;"><span class="t r">6</span></div>
<div class="c ce" style="left:1153px;top:515px;width:69px;height:18px;"><span class="t r">4</span></div>
<div class="c ce" style="left:1223px;top:515px;width:61px;height:18px;"><span class="t r">3</span></div>
</div>

<div class="txt" style="left:4px;top:536px;font-size:12.6px;">Slicer:</div>

<div id="scroll">
<div style="position:absolute;left:0;top:0;width:1274px;height:1px;background:#e0e0e0;"></div>
<div id="thumb"></div>
<div style="position:absolute;left:295px;top:4px;width:1px;height:7px;background:#444;box-shadow:1px 0 0 #f4f4f4;"></div>
<div style="position:absolute;left:298px;top:4px;width:1px;height:7px;background:#444;box-shadow:1px 0 0 #f4f4f4;"></div>
<div style="position:absolute;left:301px;top:4px;width:1px;height:7px;background:#444;box-shadow:1px 0 0 #f4f4f4;"></div>
<svg style="position:absolute;left:0;top:0" width="1274" height="14"><defs><linearGradient id="arL" x1="0" x2="1"><stop offset="0" stop-color="#707070"/><stop offset="1" stop-color="#101010"/></linearGradient><linearGradient id="arR" x1="0" x2="1"><stop offset="0" stop-color="#101010"/><stop offset="1" stop-color="#808080"/></linearGradient></defs><polygon points="-0.5,7 3.8,3.4 3.8,10.8" fill="url(#arL)"/><polygon points="1264,3.4 1268.4,7.2 1264,11" fill="url(#arR)"/></svg>
</div>
</body></html>
